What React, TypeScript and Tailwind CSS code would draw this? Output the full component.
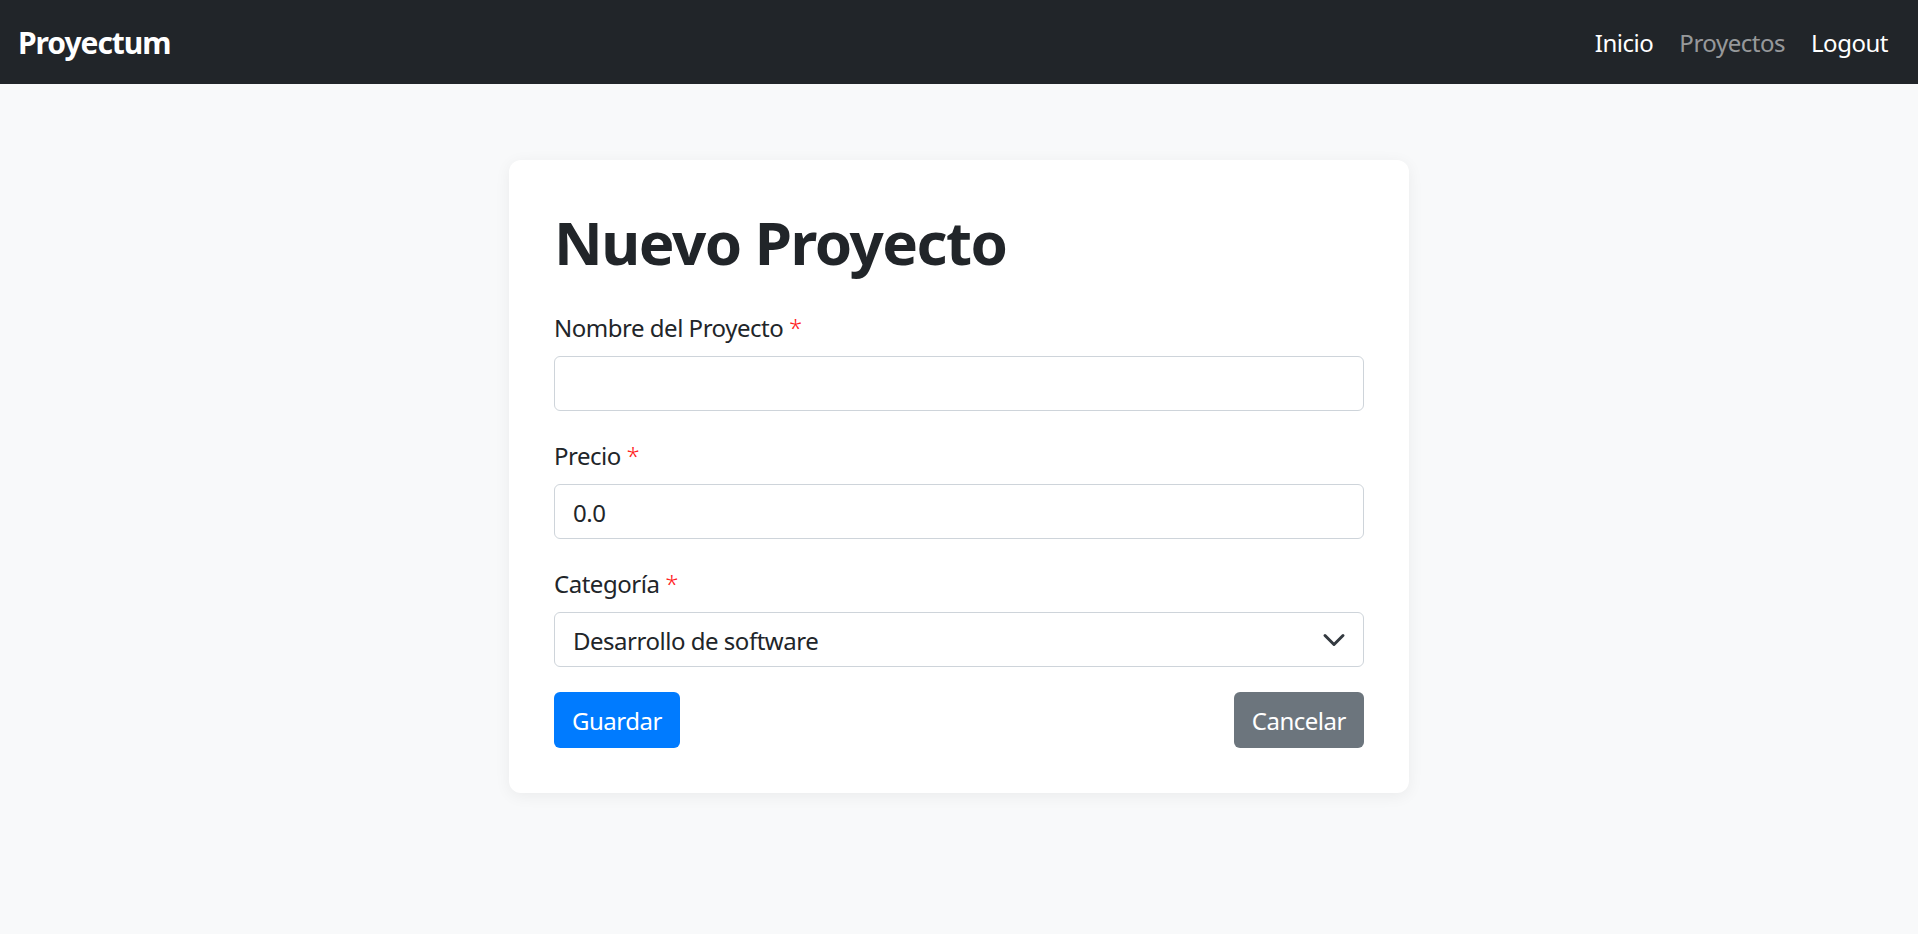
import React from "react";

const font = { fontFamily: '"Noto Sans", "Open Sans", sans-serif' };

function Label({ children }: { children: React.ReactNode }) {
  return (
    <label className="block h-[36px] leading-[36px] pt-[1px] text-[24px] tracking-[-0.02em] text-[#212529] mb-[11px]">
      {children} <span className="text-[#ff2020] font-light">*</span>
    </label>
  );
}

export default function App() {
  return (
    <div className="min-h-screen bg-[#f8f9fa]" style={font}>
      <nav className="h-[84px] bg-[#212529] flex items-center justify-between pl-[18px] pr-[17px]">
        <a className="text-white font-bold text-[30px] leading-[45px] tracking-[-0.035em]">Proyectum</a>
        <div className="flex items-center text-[24px] leading-[36px] tracking-[-0.02em] pt-[2px]">
          <a className="px-[13px] text-white">Inicio</a>
          <a className="px-[13px] text-[rgba(255,255,255,0.55)]">Proyectos</a>
          <a className="px-[13px] text-white">Logout</a>
        </div>
      </nav>

      <div className="w-[900px] mx-auto mt-[76px] bg-white rounded-[12px] shadow-[0_3px_16px_rgba(0,0,0,0.06)] px-[45px] pt-[45px] pb-[45px]">
        <h1 className="text-[60px] leading-[72px] font-bold tracking-[-0.025em] text-[#212529] mb-[31px] pt-[1px]">Nuevo Proyecto</h1>

        <div className="mb-[26px]">
          <Label>Nombre del Proyecto</Label>
          <input
            type="text"
            className="block w-full h-[55px] border border-[#ced4da] rounded-[6px] px-[18px] text-[24px] tracking-[-0.02em] text-[#212529] bg-white outline-none"
          />
        </div>

        <div className="mb-[26px]">
          <Label>Precio</Label>
          <input
            type="text"
            defaultValue="0.0"
            className="block w-full h-[55px] border border-[#ced4da] rounded-[6px] px-[18px] pt-[2px] text-[24px] tracking-[-0.02em] text-[#212529] bg-white outline-none"
          />
        </div>

        <div className="mb-[25px]">
          <Label>Categoría</Label>
          <div className="relative">
            <select
              defaultValue="dev"
              className="block w-full h-[55px] border border-[#ced4da] rounded-[6px] pl-[18px] pr-[54px] pt-[2px] text-[24px] tracking-[-0.02em] text-[#212529] bg-white outline-none appearance-none"
              style={font}
            >
              <option value="dev">Desarrollo de software</option>
            </select>
            <svg
              className="absolute right-[18px] top-1/2 -translate-y-1/2 pointer-events-none"
              width="24"
              height="24"
              viewBox="0 0 16 16"
              fill="none"
            >
              <path d="m2 5 6 6 6-6" stroke="#343a40" strokeWidth="2" strokeLinecap="round" strokeLinejoin="round" />
            </svg>
          </div>
        </div>

        <div className="flex justify-between">
          <button className="h-[56px] px-[18px] pt-[2px] rounded-[6px] bg-[#007bff] text-white text-[24px] leading-[36px] tracking-[-0.02em]">
            Guardar
          </button>
          <button className="h-[56px] px-[18px] pt-[2px] rounded-[6px] bg-[#6c757d] text-white text-[24px] leading-[36px] tracking-[-0.02em]">
            Cancelar
          </button>
        </div>
      </div>
    </div>
  );
}
